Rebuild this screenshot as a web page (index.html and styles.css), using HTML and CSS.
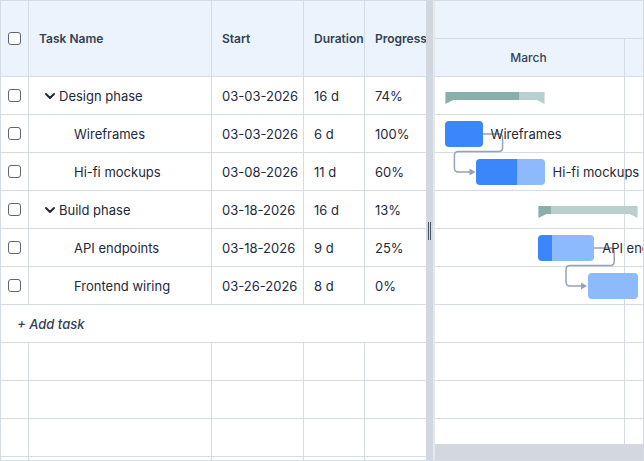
FILE: index.html
```html
<!DOCTYPE html>
<html>
<head>
    <title>Project plan - Gantt</title>
    <link rel="stylesheet" href="styles.css">
</head>
<body>
<div class="gantt">
    <div class="grid">
        <div class="grid-head">
            <div class="cell check"><input type="checkbox"></div>
            <div class="cell">Task Name</div>
            <div class="cell">Start</div>
            <div class="cell">Duration</div>
            <div class="cell">Progress</div>
        </div>
        <div class="grid-row">
            <div class="cell check"><input type="checkbox"></div>
            <div class="cell name parent">
                <svg class="toggle" width="12" height="12" viewBox="0 0 12 12"><path d="M2 4 L6 8 L10 4" fill="none" stroke="#1f2937" stroke-width="2" stroke-linecap="round" stroke-linejoin="round"/></svg>
                Design phase
            </div>
            <div class="cell">03-03-2026</div>
            <div class="cell">16 d</div>
            <div class="cell">74%</div>
        </div>
        <div class="grid-row">
            <div class="cell check"><input type="checkbox"></div>
            <div class="cell name child">Wireframes</div>
            <div class="cell">03-03-2026</div>
            <div class="cell">6 d</div>
            <div class="cell">100%</div>
        </div>
        <div class="grid-row">
            <div class="cell check"><input type="checkbox"></div>
            <div class="cell name child">Hi-fi mockups</div>
            <div class="cell">03-08-2026</div>
            <div class="cell">11 d</div>
            <div class="cell">60%</div>
        </div>
        <div class="grid-row">
            <div class="cell check"><input type="checkbox"></div>
            <div class="cell name parent">
                <svg class="toggle" width="12" height="12" viewBox="0 0 12 12"><path d="M2 4 L6 8 L10 4" fill="none" stroke="#1f2937" stroke-width="2" stroke-linecap="round" stroke-linejoin="round"/></svg>
                Build phase
            </div>
            <div class="cell">03-18-2026</div>
            <div class="cell">16 d</div>
            <div class="cell">13%</div>
        </div>
        <div class="grid-row">
            <div class="cell check"><input type="checkbox"></div>
            <div class="cell name child">API endpoints</div>
            <div class="cell">03-18-2026</div>
            <div class="cell">9 d</div>
            <div class="cell">25%</div>
        </div>
        <div class="grid-row">
            <div class="cell check"><input type="checkbox"></div>
            <div class="cell name child">Frontend wiring</div>
            <div class="cell">03-26-2026</div>
            <div class="cell">8 d</div>
            <div class="cell">0%</div>
        </div>
        <div class="add-row">+ Add task</div>
        <div class="grid-row"><div class="cell"></div><div class="cell"></div><div class="cell"></div><div class="cell"></div><div class="cell"></div></div>
        <div class="grid-row"><div class="cell"></div><div class="cell"></div><div class="cell"></div><div class="cell"></div><div class="cell"></div></div>
        <div class="grid-row"><div class="cell"></div><div class="cell"></div><div class="cell"></div><div class="cell"></div><div class="cell"></div></div>
        <div class="grid-row"><div class="cell"></div><div class="cell"></div><div class="cell"></div><div class="cell"></div><div class="cell"></div></div>
    </div>

    <div class="splitter"><span class="handle"></span></div>

    <div class="chart">
        <div class="scale-top"></div>
        <div class="scale-months">
            <div class="month">March</div>
            <div class="month"></div>
        </div>
        <div class="chart-body">
            <!-- dependency links -->
            <svg class="links" width="210" height="383" viewBox="0 0 210 383">
                <path d="M49.6 57 H65.6 Q69.6 57 69.6 61 V70.5 Q69.6 74.5 65.6 74.5 H25.4 Q21.4 74.5 21.4 78.5 V91 Q21.4 95 25.4 95 H37" fill="none" stroke="#94a3b8" stroke-width="1.5"/>
                <polygon points="36.5,91.5 42.5,95 36.5,98.5" fill="#94a3b8"/>
                <path d="M161.2 171 H177.2 Q181.2 171 181.2 175 V184.5 Q181.2 188.5 177.2 188.5 H137 Q133 188.5 133 192.5 V205 Q133 209 137 209 H148.5" fill="none" stroke="#94a3b8" stroke-width="1.5"/>
                <polygon points="148,205.5 154,209 148,212.5" fill="#94a3b8"/>
            </svg>

            <div class="chart-row">
                <div class="summary" style="left:12.4px; width:99.2px; --p:74%"></div>
            </div>
            <div class="chart-row">
                <div class="bar" style="left:12.4px; width:37.2px; --p:100%"><span class="bar-label">Wireframes</span></div>
            </div>
            <div class="chart-row">
                <div class="bar" style="left:43.4px; width:68.2px; --p:60%"><span class="bar-label">Hi-fi mockups</span></div>
            </div>
            <div class="chart-row">
                <div class="summary" style="left:105.4px; width:99.2px; --p:13%"></div>
            </div>
            <div class="chart-row">
                <div class="bar" style="left:105.4px; width:55.8px; --p:25%"><span class="bar-label">API endpoints</span></div>
            </div>
            <div class="chart-row">
                <div class="bar" style="left:155px; width:49.6px; --p:0%"></div>
            </div>
            <div class="chart-row"></div>
            <div class="chart-row"></div>
            <div class="chart-row"></div>
            <div class="chart-row"></div>
            <div class="chart-row"></div>

            <div class="hscroll"></div>
        </div>
    </div>
</div>
</body>
</html>
```

FILE: styles.css
```css
body {
    margin: 0;
    font-family: Inter, "Noto Sans", sans-serif;
    color: #1f2937;
}

.gantt {
    width: 644px;
    height: 461px;
    box-sizing: border-box;
    border: 1px solid #d5dbe3;
    display: flex;
    overflow: hidden;
    background: #fff;
}

/* Left grid */
.grid {
    width: 425px;
    flex: none;
    display: flex;
    flex-direction: column;
}
.grid-head, .grid-row {
    display: grid;
    grid-template-columns: 28px 183px 92px 61px 61px;
    box-sizing: border-box;
    border-bottom: 1px solid #d5dbe3;
    flex: none;
}
.grid-head {
    height: 76px;
    background: #ebf3fc;
}
.grid-row {
    height: 38px;
}
.cell {
    display: flex;
    align-items: center;
    padding-left: 10px;
    border-right: 1px solid #d5dbe3;
    font-size: 13px;
    color: #1e293b;
    white-space: nowrap;
    overflow: hidden;
}
.cell:last-child {
    border-right: none;
}
.grid-head .cell {
    font-size: 12px;
    font-weight: 600;
    color: #334155;
}
.cell.check {
    padding: 0;
    justify-content: center;
}
.cell.check input {
    appearance: none;
    margin: 0;
    width: 13px;
    height: 13px;
    box-sizing: border-box;
    border: 1px solid #5f6672;
    border-radius: 3px;
    background: #fff;
}
.cell.parent {
    padding-left: 15px;
}
.cell.parent .toggle {
    margin-right: 3px;
    flex: none;
}
.cell.child {
    padding-left: 45px;
}
.add-row {
    height: 38px;
    box-sizing: border-box;
    border-bottom: 1px solid #d5dbe3;
    display: flex;
    align-items: center;
    padding-left: 16px;
    font-size: 13px;
    font-style: italic;
    font-weight: 500;
    color: #334155;
    flex: none;
}

/* Splitter */
.splitter {
    width: 7px;
    flex: none;
    background: #d1d7df;
    display: flex;
    align-items: center;
    justify-content: center;
    position: relative;
    z-index: 5;
    box-shadow: 2px 0 0 #e4e8ed;
}
.handle {
    width: 1px;
    height: 18px;
    border-left: 1px solid #4b5563;
    border-right: 1px solid #4b5563;
}

/* Chart */
.chart {
    flex: 1;
    display: flex;
    flex-direction: column;
    overflow: hidden;
    min-width: 0;
}
.scale-top {
    height: 38px;
    flex: none;
    box-sizing: border-box;
    background: #ebf3fc;
    border-bottom: 1px solid #d5dbe3;
}
.scale-months {
    height: 38px;
    flex: none;
    display: flex;
    box-sizing: border-box;
    background: #ebf3fc;
    border-bottom: 1px solid #d5dbe3;
}
.month {
    width: 192px;
    flex: none;
    box-sizing: border-box;
    border-right: 1px solid #d5dbe3;
    display: flex;
    align-items: center;
    justify-content: center;
    font-size: 12px;
    font-weight: 500;
    color: #334155;
}
.chart-body {
    flex: 1;
    position: relative;
    overflow: hidden;
    background-image: linear-gradient(to right, transparent 191px, #d5dbe3 191px, #d5dbe3 192px, transparent 192px);
}
.chart-row {
    height: 38px;
    box-sizing: border-box;
    border-bottom: 1px solid #d5dbe3;
    position: relative;
}
.links {
    position: absolute;
    left: 0;
    top: 0;
    z-index: 1;
}
.bar {
    position: absolute;
    top: 6px;
    height: 26px;
    border-radius: 4px;
    background: linear-gradient(to right, #3b86fb var(--p), #8cbafd var(--p));
    z-index: 2;
}
.bar-label {
    position: absolute;
    left: calc(100% + 8px);
    top: 0;
    line-height: 26px;
    font-size: 13px;
    color: #1f2937;
    white-space: nowrap;
}
.summary {
    position: absolute;
    top: 15px;
    height: 12px;
    background: linear-gradient(to right, #8aaea9 var(--p), #b9cfcd var(--p));
    clip-path: polygon(0 0, 100% 0, 100% 100%, calc(100% - 8px) 8px, 8px 8px, 0 100%);
    z-index: 2;
}
.hscroll {
    position: absolute;
    left: 2px;
    right: 0;
    bottom: 0;
    height: 16px;
    background: #d3d8df;
    z-index: 3;
}
```
